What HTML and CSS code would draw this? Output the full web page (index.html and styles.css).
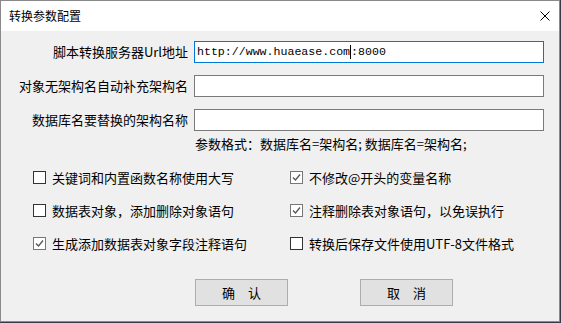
FILE: index.html
```html
<!DOCTYPE html>
<html lang="zh-CN">
<head>
<meta charset="utf-8">
<title>转换参数配置</title>
<link rel="stylesheet" href="styles.css">
</head>
<body>
<div class="window">
  <div class="titlebar">
    <span class="title">转换参数配置</span>
    <svg class="close" width="10" height="10" viewBox="0 0 10 10"><path d="M0.5 0.5 L9.5 9.5 M9.5 0.5 L0.5 9.5" stroke="#000" stroke-width="1"/></svg>
  </div>
  <div class="content">
    <div class="fields">
      <label class="lbl">脚本转换服务器Url地址</label>
      <div class="field focused"><span>http://www.huaease.com</span><span class="caret"></span><span>:8000</span></div>
      <label class="lbl">对象无架构名自动补充架构名</label>
      <div class="field"></div>
      <label class="lbl">数据库名要替换的架构名称</label>
      <div class="field"></div>
      <span></span>
      <div class="hint">参数格式：数据库名=架构名; 数据库名=架构名;</div>
    </div>
    <div class="checks">
      <div class="chk"><span class="box"></span>关键词和内置函数名称使用大写</div>
      <div class="chk"><span class="box checked"><svg width="11" height="11" viewBox="0 0 11 11"><path d="M2 5.5 L4.5 8 L9 2.5" fill="none" stroke="#555" stroke-width="1.3"/></svg></span>不修改@开头的变量名称</div>
      <div class="chk"><span class="box"></span>数据表对象，添加删除对象语句</div>
      <div class="chk"><span class="box checked"><svg width="11" height="11" viewBox="0 0 11 11"><path d="M2 5.5 L4.5 8 L9 2.5" fill="none" stroke="#555" stroke-width="1.3"/></svg></span>注释删除表对象语句，以免误执行</div>
      <div class="chk"><span class="box checked"><svg width="11" height="11" viewBox="0 0 11 11"><path d="M2 5.5 L4.5 8 L9 2.5" fill="none" stroke="#555" stroke-width="1.3"/></svg></span>生成添加数据表对象字段注释语句</div>
      <div class="chk"><span class="box"></span>转换后保存文件使用UTF-8文件格式</div>
    </div>
    <div class="buttons">
      <button class="btn">确<span class="sp"></span>认</button>
      <button class="btn">取<span class="sp"></span>消</button>
    </div>
  </div>
</div>
</body>
</html>
```
FILE: styles.css
```css
html, body {
  margin: 0;
  padding: 0;
  background: #3b3a48;
}
body {
  width: 561px;
  height: 323px;
  overflow: hidden;
  font-family: "Noto Sans CJK SC", "Noto Sans", sans-serif;
  font-size: 13px;
  color: #000;
}
.window {
  width: 558px;
  height: 320px;
  border: 1px solid #8a8a8a;
  background: #f0f0f0;
  display: flex;
  flex-direction: column;
}
.titlebar {
  height: 30px;
  flex: 0 0 30px;
  background: #fff;
  display: flex;
  align-items: center;
  justify-content: space-between;
  padding: 0 9px 0 8px;
}
.title {
  font-size: 12px;
  line-height: 14px;
}
.close {
  display: block;
}
.content {
  flex: 1;
  padding-top: 10px;
}
.fields {
  display: grid;
  grid-template-columns: 176px 350px;
  column-gap: 6px;
  row-gap: 12px;
  padding-left: 11px;
}
.lbl {
  text-align: right;
  line-height: 22px;
  height: 22px;
  white-space: nowrap;
  font-size: 13px;
}
.field {
  height: 22px;
  box-sizing: border-box;
  border: 1px solid #7a7a7a;
  background: #fff;
  font-family: "Liberation Mono", monospace;
  font-size: 11.6px;
  line-height: 20px;
  padding-left: 2px;
  display: flex;
  align-items: center;
  white-space: pre;
}
.field.focused {
  border-color: #0078d7;
}
.caret {
  display: inline-block;
  width: 1px;
  height: 14px;
  background: #000;
}
.hint {
  margin-top: -6px;
  line-height: 14px;
  font-size: 13px;
  padding-left: 1px;
  white-space: pre;
}
.checks {
  margin-top: 16px;
  padding-left: 32px;
  display: grid;
  grid-template-columns: 257px 240px;
  row-gap: 13px;
}
.chk {
  display: flex;
  align-items: center;
  height: 20px;
  white-space: nowrap;
  font-size: 13px;
}
.box {
  width: 13px;
  height: 13px;
  box-sizing: border-box;
  border: 1px solid #333;
  background: #fff;
  margin-right: 6px;
  display: flex;
  align-items: center;
  justify-content: center;
}
.box.checked {
  border-color: #777;
}
.box svg {
  display: block;
}
.buttons {
  margin-top: 26px;
  padding-left: 194px;
  display: flex;
  gap: 72px;
}
.btn {
  width: 93px;
  height: 27px;
  box-sizing: border-box;
  border: 1px solid #adadad;
  background: #e1e1e1;
  font-family: "Noto Sans CJK SC", sans-serif;
  font-size: 13px;
  color: #000;
  padding: 0;
  display: flex;
  align-items: center;
  justify-content: center;
}
.sp {
  display: inline-block;
  width: 13px;
}
```
